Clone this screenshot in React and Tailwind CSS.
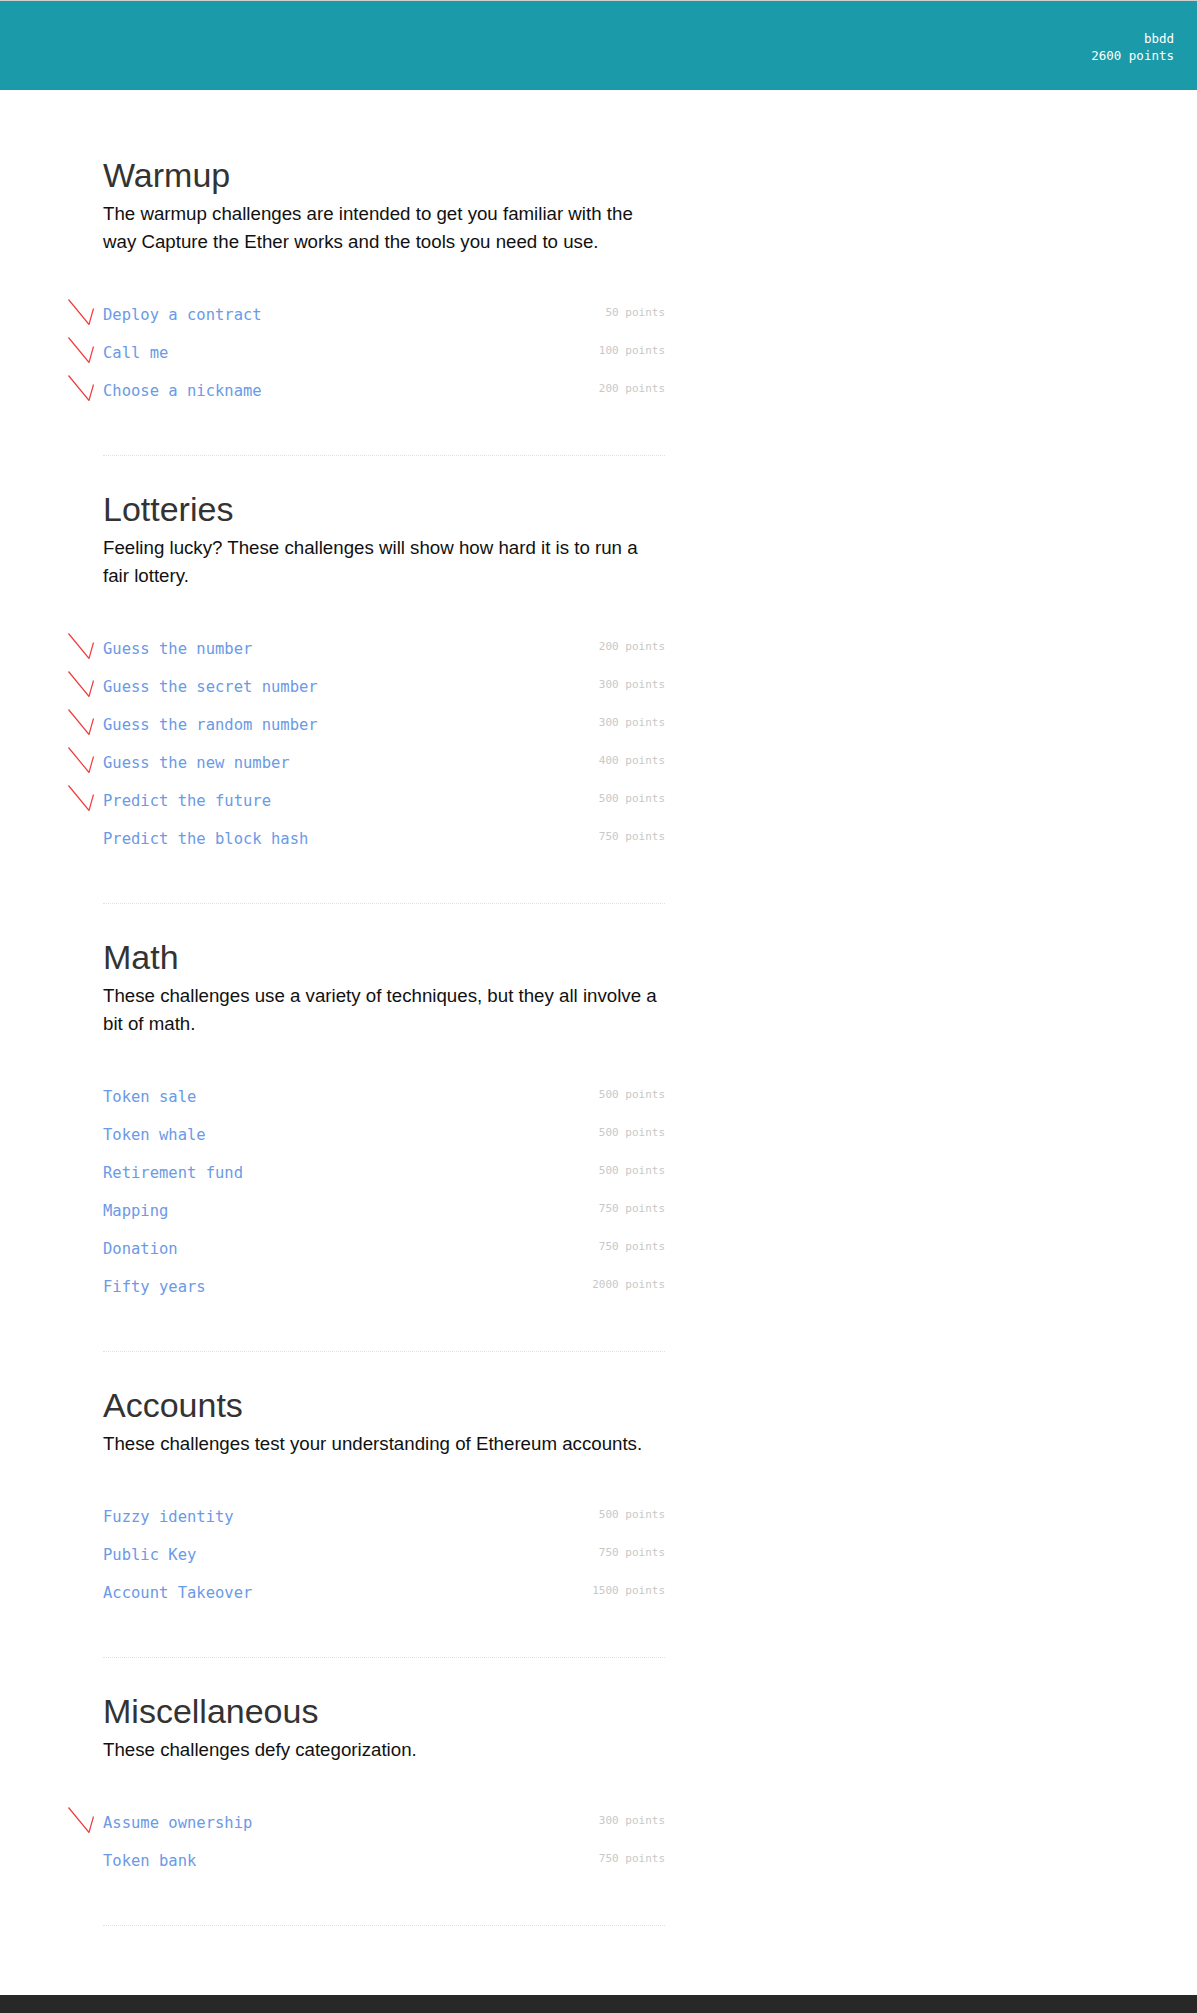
import React from "react";

const sections = [
  {
    title: "Warmup",
    desc: "The warmup challenges are intended to get you familiar with the way Capture the Ether works and the tools you need to use.",
    items: [
      { name: "Deploy a contract", points: 50, done: true },
      { name: "Call me", points: 100, done: true },
      { name: "Choose a nickname", points: 200, done: true },
    ],
  },
  {
    title: "Lotteries",
    desc: "Feeling lucky? These challenges will show how hard it is to run a fair lottery.",
    items: [
      { name: "Guess the number", points: 200, done: true },
      { name: "Guess the secret number", points: 300, done: true },
      { name: "Guess the random number", points: 300, done: true },
      { name: "Guess the new number", points: 400, done: true },
      { name: "Predict the future", points: 500, done: true },
      { name: "Predict the block hash", points: 750 },
    ],
  },
  {
    title: "Math",
    desc: "These challenges use a variety of techniques, but they all involve a bit of math.",
    items: [
      { name: "Token sale", points: 500 },
      { name: "Token whale", points: 500 },
      { name: "Retirement fund", points: 500 },
      { name: "Mapping", points: 750 },
      { name: "Donation", points: 750 },
      { name: "Fifty years", points: 2000 },
    ],
  },
  {
    title: "Accounts",
    desc: "These challenges test your understanding of Ethereum accounts.",
    items: [
      { name: "Fuzzy identity", points: 500 },
      { name: "Public Key", points: 750 },
      { name: "Account Takeover", points: 1500 },
    ],
  },
  {
    title: "Miscellaneous",
    desc: "These challenges defy categorization.",
    items: [
      { name: "Assume ownership", points: 300, done: true },
      { name: "Token bank", points: 750 },
    ],
  },
];

function Check() {
  return (
    <svg
      className="absolute -left-[35px] top-[2px]"
      width="26"
      height="26"
      viewBox="0 0 26 26"
      fill="none"
    >
      <path d="M0.5 0.5 L21 25.5 L25.5 9.5" stroke="#f23a3a" strokeWidth="1.2" />
    </svg>
  );
}

function App() {
  return (
    <div className="bg-white font-['Liberation_Sans',Arial,sans-serif]">
      {/* Header */}
      <header className="h-[90px] bg-[#1b9aaa] border-t border-[#d0d0d0] flex justify-end pr-[23px] pt-[29px]">
        <div className="text-right text-white text-[12.5px] leading-[17px] font-['DejaVu_Sans_Mono',monospace]">
          <div>bbdd</div>
          <div>2600 points</div>
        </div>
      </header>

      <main className="ml-[103px] w-[562px] pt-[66px] pb-[69px]">
        {sections.map((s, i) => (
          <section key={s.title} className={i > 0 ? "pt-[34px]" : ""}>
            <h1 className="text-[34px] leading-[38px] text-[#333]">
              {s.title}
            </h1>
            <p className="mt-[6px] text-[18.7px] leading-[28px] text-[#111]">
              {s.desc}
            </p>

            <ul className="mt-[41px]">
              {s.items.map((it) => (
                <li
                  key={it.name}
                  className="relative h-[38px] flex items-center justify-between font-['DejaVu_Sans_Mono',monospace]"
                >
                  {it.done && <Check />}
                  <a className="text-[15.5px] text-[#6b9ae6]">{it.name}</a>
                  <span className="mb-[5px] text-[11px] text-[#c8c8c8]">
                    {it.points} points
                  </span>
                </li>
              ))}
            </ul>

            <div className="mt-[44px] border-t border-dotted border-[#e2e2e2]" />
          </section>
        ))}
      </main>

      <footer className="h-[18px] bg-[#282828]" />
    </div>
  );
}

export default App;
